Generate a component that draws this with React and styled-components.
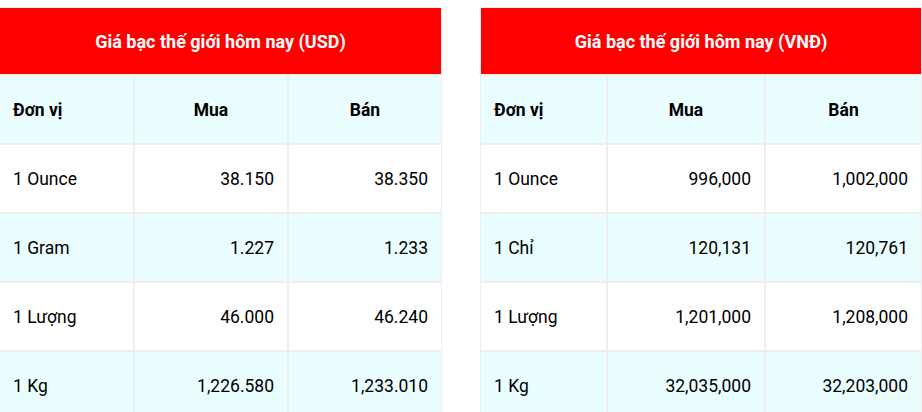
import React from "react";
import styled, { createGlobalStyle } from "styled-components";

const Global = createGlobalStyle`
  html, body { margin: 0; padding: 0; background: #fff; overflow: hidden; }
  body { font-family: Roboto, "Noto Sans", "Liberation Sans", sans-serif; color: #000; }
`;

const Page = styled.div`
  display: flex;
  gap: 38px;
  padding-top: 7px;
  margin-left: -1px;
`;

const Table = styled.table`
  width: ${(p) => p.$w}px;
  border-collapse: separate;
  border-spacing: 0;
  table-layout: fixed;
  flex: none;
`;

const TitleCell = styled.th`
  background: #ff0000;
  color: #fff;
  font-weight: 700;
  font-size: 18px;
  text-align: center;
  border: 1px solid #eee;
  height: 68px;
  padding: 0;
  box-sizing: border-box;
`;

const Row = styled.tr`
  background: ${(p) => (p.$alt ? "#ebfeff" : "#ffffff")};
`;

const Cell = styled.td`
  border: 1px solid #eee;
  height: 69px;
  box-sizing: border-box;
  padding: 0 13px 0 13px;
  font-size: 17.5px;
  font-weight: ${(p) => (p.$head ? 700 : 400)};
  text-align: ${(p) => p.$align || "left"};
  white-space: nowrap;
`;

const tables = [
  {
    title: "Giá bạc thế giới hôm nay (USD)",
    w: 443,
    cols: [135, 154, 154],
    rows: [
      ["1 Ounce", "38.150", "38.350"],
      ["1 Gram", "1.227", "1.233"],
      ["1 Lượng", "46.000", "46.240"],
      ["1 Kg", "1,226.580", "1,233.010"],
    ],
  },
  {
    title: "Giá bạc thế giới hôm nay (VNĐ)",
    w: 442,
    cols: [127, 158, 157],
    rows: [
      ["1 Ounce", "996,000", "1,002,000"],
      ["1 Chỉ", "120,131", "120,761"],
      ["1 Lượng", "1,201,000", "1,208,000"],
      ["1 Kg", "32,035,000", "32,203,000"],
    ],
  },
];

export default function App() {
  return (
    <>
      <Global />
      <Page>
        {tables.map((t) => (
          <Table key={t.title} $w={t.w}>
            <colgroup>
              {t.cols.map((c, i) => (
                <col key={i} style={{ width: c }} />
              ))}
            </colgroup>
            <thead>
              <tr>
                <TitleCell colSpan={3}>{t.title}</TitleCell>
              </tr>
            </thead>
            <tbody>
              <Row $alt>
                <Cell $head>Đơn vị</Cell>
                <Cell $head $align="center">Mua</Cell>
                <Cell $head $align="center">Bán</Cell>
              </Row>
              {t.rows.map((r, i) => (
                <Row key={r[0]} $alt={i % 2 === 1}>
                  <Cell>{r[0]}</Cell>
                  <Cell $align="right">{r[1]}</Cell>
                  <Cell $align="right">{r[2]}</Cell>
                </Row>
              ))}
            </tbody>
          </Table>
        ))}
      </Page>
    </>
  );
}
